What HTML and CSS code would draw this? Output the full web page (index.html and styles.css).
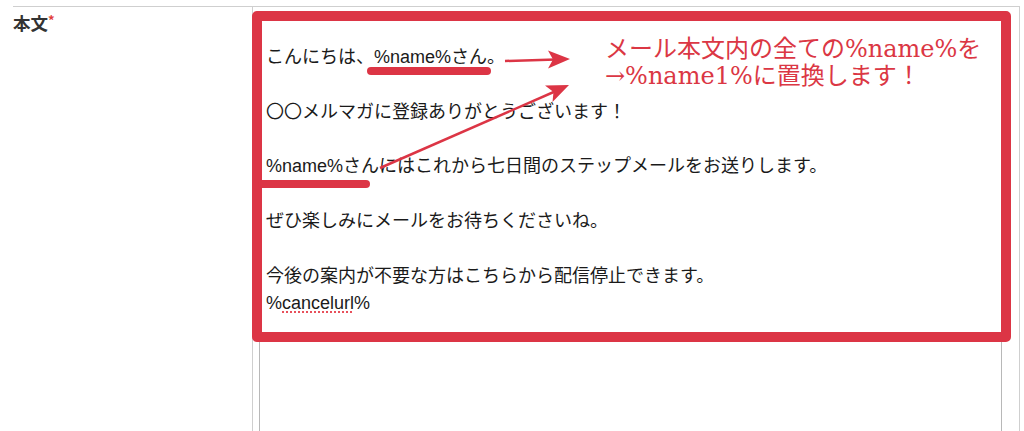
FILE: index.html
```html
<!DOCTYPE html>
<html lang="ja">
<head>
  <meta charset="UTF-8">
  <meta name="viewport" content="width=device-width, initial-scale=1.0">
  <title>本文の置換</title>
  <link rel="stylesheet" href="styles.css">
</head>
<body>
  <div class="form-table">
    <div class="row">
      <div class="label">本文<span class="req">*</span></div>
      <div class="field">
        <div class="textarea">
          <p>&nbsp;</p>
          <p>こんにちは、%name%さん。</p>
          <p>&nbsp;</p>
          <p>〇〇メルマガに登録ありがとうございます！</p>
          <p>&nbsp;</p>
          <p>%name%さんにはこれから七日間のステップメールをお送りします。</p>
          <p>&nbsp;</p>
          <p>ぜひ楽しみにメールをお待ちくださいね。</p>
          <p>&nbsp;</p>
          <p>今後の案内が不要な方はこちらから配信停止できます。</p>
          <p>%<span class="typo">cancelurl</span>%</p>
        </div>
      </div>
    </div>
  </div>

  <!-- annotation drawn over the screenshot -->
  <svg class="marks" width="1024" height="431" viewBox="0 0 1024 431">
    <rect x="257" y="16" width="749" height="321" fill="none" stroke="#dc3545" stroke-width="10" stroke-linejoin="round"/>
    <line x1="371" y1="71" x2="487" y2="71" stroke="#dc3545" stroke-width="8" stroke-linecap="round"/>
    <line x1="262" y1="184" x2="366" y2="184" stroke="#dc3545" stroke-width="8" stroke-linecap="round"/>
    <line x1="505" y1="61" x2="556" y2="59.5" stroke="#dc3545" stroke-width="2.5"/>
    <polygon points="570,59 548,50.5 553,59.5 548,68.5" fill="#dc3545"/>
    <line x1="380" y1="168" x2="556" y2="91" stroke="#dc3545" stroke-width="2.5"/>
    <polygon points="569,85 545,85.5 553.5,92 552.5,102" fill="#dc3545"/>
  </svg>
  <p class="note">メール本文内の全ての%name%を<br>→%name1%に置換します！</p>
</body>
</html>
```

FILE: styles.css
```css
html, body {
  margin: 0;
  padding: 0;
  height: 431px;
  overflow: hidden;
  background: #fff;
}
body {
  position: relative;
  font-family: "Liberation Sans", "Noto Sans CJK JP", sans-serif;
  color: #1a1a1a;
}
.form-table {
  margin: 6px 4px 0 13px;
  border-top: 1px solid #cfcfcf;
}
.row {
  display: grid;
  grid-template-columns: 239px 1fr;
}
.label {
  padding-top: 2px;
  font-family: "Noto Sans CJK JP", sans-serif;
  font-weight: bold;
  font-size: 17.5px;
  line-height: 22px;
  color: #333;
}
.req {
  color: #e2403a;
  font-size: 13px;
  vertical-align: 5px;
}
.field {
  border-left: 1px solid #cfcfcf;
  border-right: 1px solid #cfcfcf;
  padding: 6px 17px 0 6px;
  height: 500px;
}
.textarea {
  border: 1px solid #b8b8b8;
  padding: 3px 6px;
  height: 480px;
  font-size: 18px;
  line-height: 27.3px;
}
.textarea p {
  margin: 0;
  white-space: nowrap;
}
.typo {
  text-decoration: underline dotted #e8505b;
  text-decoration-thickness: 2px;
  text-underline-offset: 3px;
}
.marks {
  position: absolute;
  top: 0;
  left: 0;
}
.note {
  position: absolute;
  top: 36px;
  left: 605px;
  margin: 0;
  font-family: "DejaVu Serif", "Noto Sans CJK JP", serif;
  font-size: 24px;
  line-height: 27px;
  color: #db3744;
  white-space: nowrap;
}
```
